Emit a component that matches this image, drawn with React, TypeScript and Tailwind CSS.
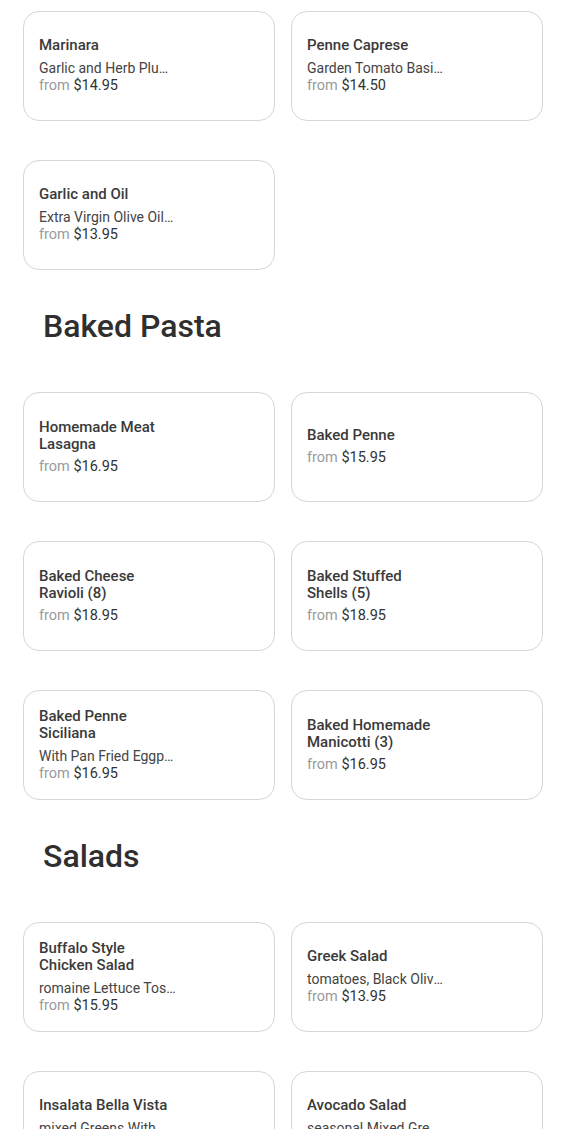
type Item = {
  name: string;
  desc?: string;
  price: string;
};

type Section = {
  title?: string;
  items: Item[];
};

const sections: Section[] = [
  {
    items: [
      { name: "Marinara", desc: "Garlic and Herb Plum Tomato Sauce", price: "$14.95" },
      { name: "Penne Caprese", desc: "Garden Tomato Basil, Fresh Mozzarella", price: "$14.50" },
      { name: "Garlic and Oil", desc: "Extra Virgin Olive Oil, Fresh Garlic", price: "$13.95" },
    ],
  },
  {
    title: "Baked Pasta",
    items: [
      { name: "Homemade Meat Lasagna", price: "$16.95" },
      { name: "Baked Penne", price: "$15.95" },
      { name: "Baked Cheese Ravioli (8)", price: "$18.95" },
      { name: "Baked Stuffed Shells (5)", price: "$18.95" },
      { name: "Baked Penne Siciliana", desc: "With Pan Fried Eggplant and Mozzarella", price: "$16.95" },
      { name: "Baked Homemade Manicotti (3)", price: "$16.95" },
    ],
  },
  {
    title: "Salads",
    items: [
      { name: "Buffalo Style Chicken Salad", desc: "romaine Lettuce Tossed with Buffalo Chicken", price: "$15.95" },
      { name: "Greek Salad", desc: "tomatoes, Black Olives, Feta Cheese", price: "$13.95" },
      { name: "Insalata Bella Vista", desc: "mixed Greens With Sun Dried Tomatoes", price: "$14.95" },
      { name: "Avocado Salad", desc: "seasonal Mixed Greens, Avocado", price: "$14.95" },
    ],
  },
];

function MenuCard({ item }: { item: Item }) {
  return (
    <div className="h-[110px] rounded-2xl border border-[#d6d6d6] bg-white px-[15px] flex flex-col justify-center">
      <div className="w-[138px]">
        <h3 className="text-[15px] leading-[17px] font-medium text-[#3a3a3a] mb-[5px]">
          {item.name}
        </h3>
        {item.desc && (
          <p className="w-[137px] text-[14px] leading-[18px] text-[#444444] truncate">
            {item.desc}
          </p>
        )}
        <p className="text-[14.5px] leading-[18px] text-[#333333]">
          <span className="text-[#9a9a9a]">from</span> {item.price}
        </p>
      </div>
    </div>
  );
}

export default function App() {
  return (
    <div
      className="min-h-screen bg-white pt-[11px] pl-[23px]"
      style={{ fontFamily: "Roboto, 'Liberation Sans', sans-serif" }}
    >
      {sections.map((section, i) => (
        <section key={i}>
          {section.title && (
            <h2 className="mt-[36px] mb-[46px] pl-5 text-[32px] leading-10 font-medium text-[#2f2f2f]">
              {section.title}
            </h2>
          )}
          <div className="grid grid-cols-[252px_252px] gap-x-4 gap-y-[39px]">
            {section.items.map((item) => (
              <MenuCard key={item.name} item={item} />
            ))}
          </div>
        </section>
      ))}
    </div>
  );
}
